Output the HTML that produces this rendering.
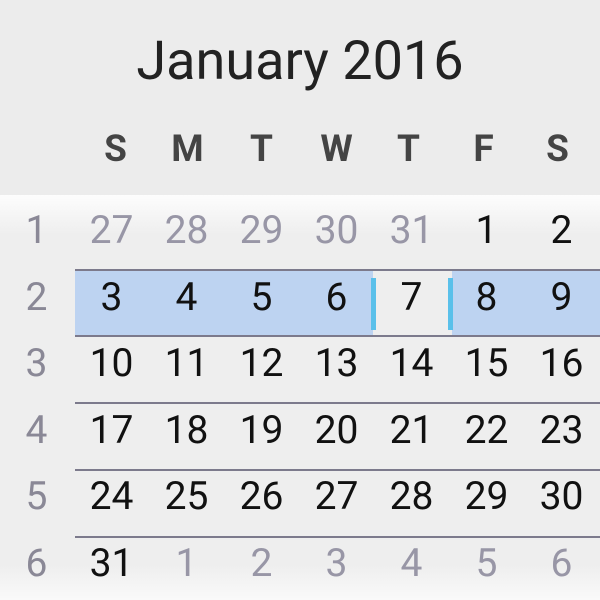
<!DOCTYPE html>
<html><head><style>
html,body{margin:0;padding:0}
body{width:600px;height:600px;position:relative;overflow:hidden;background:#ececec;font-family:"Roboto","Liberation Sans",sans-serif}
.hdr{position:absolute;left:0;top:0;width:600px;height:195px;background:#ececec}
.title{position:absolute;left:0;width:600px;top:31px;text-align:center;font-size:54px;color:#222;line-height:62px}
.dn{position:absolute;top:128px;width:75px;text-align:center;font-size:37px;font-weight:bold;color:#444;line-height:44px}
.body{position:absolute;left:0;top:195px;width:600px;height:405px;background:linear-gradient(#fdfdfd 0px,#eeeeee 40px,#eeeeee 370px,#fafafa 405px)}
.line{position:absolute;left:75px;width:525px;height:2px;background:#7c7a8c}
.hl{position:absolute;top:271px;height:65px;background:#bdd3f1}
.bar{position:absolute;top:278px;width:5px;height:52px;background:#5ac0ea}
.c{position:absolute;width:75px;text-align:center;font-size:39px;line-height:44px;color:#111}
.w{color:#8a8896}
.g{color:#9896a6}
</style></head><body>
<div class="hdr"></div>
<div class="title">January 2016</div>
<div class="dn" style="left:78px">S</div>
<div class="dn" style="left:150px">M</div>
<div class="dn" style="left:224px">T</div>
<div class="dn" style="left:299px">W</div>
<div class="dn" style="left:371px">T</div>
<div class="dn" style="left:446px">F</div>
<div class="dn" style="left:520px">S</div>
<div class="body"></div>
<div class="hl" style="left:75px;width:298px"></div>
<div class="hl" style="left:452px;width:148px"></div>
<div class="bar" style="left:371px"></div>
<div class="bar" style="left:448px"></div>
<div class="line" style="top:269px"></div>
<div class="line" style="top:335px"></div>
<div class="line" style="top:402px"></div>
<div class="line" style="top:469px"></div>
<div class="line" style="top:536px"></div>
<div id="grid"></div>
<script>
var rows=[["27","28","29","30","31","1","2"],["3","4","5","6","7","8","9"],["10","11","12","13","14","15","16"],["17","18","19","20","21","22","23"],["24","25","26","27","28","29","30"],["31","1","2","3","4","5","6"]];
var h="";
for(var r=0;r<6;r++){var y=208+r*66.6;
h+='<div class="c w" style="left:-1px;top:'+y+'px">'+(r+1)+'</div>';
for(var d=0;d<7;d++){var gr=(r==0&&d<5)||(r==5&&d>0);
h+='<div class="c'+(gr?' g':'')+'" style="left:'+(74+d*75)+'px;top:'+y+'px">'+rows[r][d]+'</div>';}}
document.getElementById('grid').innerHTML=h;
</script>
</body></html>
